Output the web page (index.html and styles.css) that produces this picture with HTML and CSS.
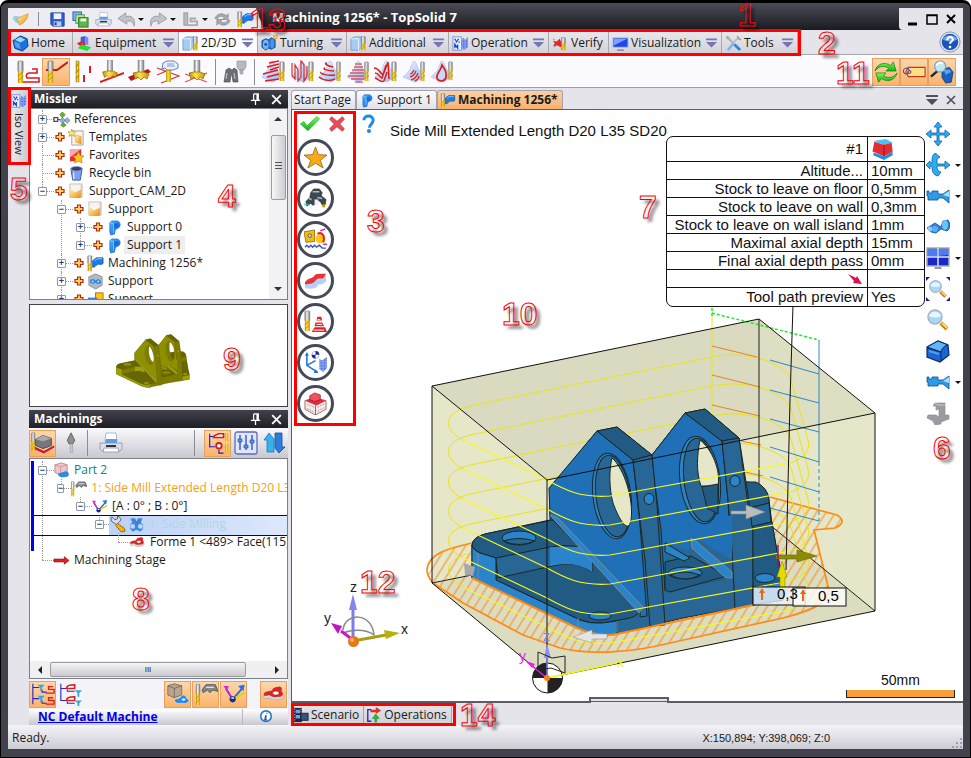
FILE: index.html
```html
<!DOCTYPE html>
<html lang="en">
<head>
<meta charset="utf-8">
<title>Machining 1256* - TopSolid 7</title>
<link rel="stylesheet" href="styles.css">
</head>
<body>
<svg class="defs" aria-hidden="true">
  <defs>
    <linearGradient id="gShank" x1="0" x2="1" y1="0" y2="0"><stop offset="0" stop-color="#777"/><stop offset=".4" stop-color="#f4f4f4"/><stop offset="1" stop-color="#777"/></linearGradient>
    <linearGradient id="gGold" x1="0" x2="1" y1="0" y2="0"><stop offset="0" stop-color="#b88c00"/><stop offset=".4" stop-color="#ffe04a"/><stop offset="1" stop-color="#c99b00"/></linearGradient>
    <linearGradient id="gBlue" x1="0" x2="1" y1="0" y2="1"><stop offset="0" stop-color="#48b8ff"/><stop offset="1" stop-color="#0a5fe0"/></linearGradient>
    <linearGradient id="gOrange" x1="0" x2="1" y1="0" y2="1"><stop offset="0" stop-color="#fff6c0"/><stop offset="1" stop-color="#ee8a00"/></linearGradient>
    <linearGradient id="gGreen" x1="0" x2="0" y1="0" y2="1"><stop offset="0" stop-color="#7dfa5c"/><stop offset="1" stop-color="#12b012"/></linearGradient>
    <linearGradient id="gCone" x1="0" x2="1" y1="0" y2="1"><stop offset="0" stop-color="#f4f9ff"/><stop offset="1" stop-color="#8fb4f4"/></linearGradient>
    <pattern id="hatch" width="8" height="8" patternUnits="userSpaceOnUse" patternTransform="rotate(32)"><path d="M4 0V8" stroke="#f28c1e" stroke-width="1"/></pattern>
    <pattern id="dots" width="3" height="3" patternUnits="userSpaceOnUse"><rect width="3" height="3" fill="#7f9cf0"/><rect width="1" height="1" fill="#1d3ccc"/></pattern>
  </defs>

  <symbol id="mill" viewBox="0 0 8 24" preserveAspectRatio="none"><rect x="1" y="1" width="6" height="11" rx="1" fill="url(#gShank)" stroke="#777" stroke-width=".6"/><rect x="1" y="11" width="6" height="12" fill="url(#gGold)"/><path d="M1 16l6-4M1 21l6-5" stroke="#a07800" stroke-width=".7"/></symbol>
  <symbol id="plus" viewBox="0 0 12 12"><path d="M4.500 2h3v2.500h2.500v3h-2.500v2.500h-3v-2.500h-2.500v-3h2.500z" fill="#ffd060" stroke="#b02a10" stroke-width="1.200"/></symbol>

  <symbol id="i-logo" viewBox="0 0 18 18"><path d="M1 6c4-2 8 0 10 2L7 13C3 13 1 9 1 6z" fill="#8ed2f6"/><path d="M5 8L17 3c0 5-4 10-9 12z" fill="url(#gOrange)" stroke="#d68a10" stroke-width=".6"/></symbol>
  <symbol id="i-save" viewBox="0 0 18 18"><path d="M2 2h14v14H4l-2-2z" fill="#2f62d2" stroke="#1c3f9a"/><rect x="5" y="2.500" width="8" height="6" fill="#eef4ff"/><rect x="5" y="11" width="8" height="5" fill="#b9cdf4"/><rect x="6" y="12" width="2" height="3" fill="#1c3f9a"/></symbol>
  <symbol id="i-saveall" viewBox="0 0 18 18"><rect x="1" y="1" width="9" height="9" fill="#7fb2ef" stroke="#2f62b2"/><rect x="4" y="4" width="9" height="9" fill="#bde4a0" stroke="#4a9a3a"/><rect x="7" y="7" width="10" height="10" fill="#5cb84a" stroke="#2c7c26"/><rect x="9" y="8" width="6" height="3" fill="#fff"/></symbol>
  <symbol id="i-print" viewBox="0 0 24 24"><path d="M7 2h10l1 8H6z" fill="#fff" stroke="#9ab" stroke-width=".8"/><path d="M7 8h11v4H6z" fill="#5b9de8"/><path d="M1 12h22v6l-2 2H3l-2-2z" fill="#d9dfec" stroke="#8893a8" stroke-width=".8"/><path d="M5 17h14l1 4H4z" fill="#fff" stroke="#8893a8" stroke-width=".8"/><rect x="7" y="14" width="10" height="2" fill="#334"/></symbol>
  <symbol id="i-undo" viewBox="0 0 18 18"><path d="M0 8l8-6 .5 4C14 4 19 8 17 16c-1-5-4-6-8-5l.5 3z" fill="#c0c3c8" stroke="#9a9ea4"/></symbol>
  <symbol id="i-redo" viewBox="0 0 18 18"><path d="M18 8l-8-6-.5 4C4 4-1 8 1 16c1-5 4-6 8-5l-.5 3z" fill="#c0c3c8" stroke="#9a9ea4"/></symbol>
  <symbol id="i-greypath" viewBox="0 0 18 18"><rect x="2" y="2" width="4" height="13" fill="#bbb" stroke="#999"/><path d="M5 15h11v-4H9v-3h6" fill="none" stroke="#aaa" stroke-width="2"/></symbol>
  <symbol id="i-sync" viewBox="0 0 18 18"><path d="M1 8c2-6 9-6 12-3l2-2v6H9l2-2C8 5 5 5 4 8z" fill="#a8acb0" stroke="#74787c" stroke-width=".6"/><path d="M17 10c-2 6-9 6-12 3l-2 2V9h6l-2 2c3 2 6 2 7-1z" fill="#a8acb0" stroke="#74787c" stroke-width=".6"/></symbol>
  <symbol id="i-machdoc" viewBox="0 0 18 18"><use href="#mill" x="0" y="0" width="6" height="18"/><path d="M6 6l4-3h7v6c-2 2-4 0-6 1s-2 3-5 3z" fill="#1c7ce8" stroke="#0c4fae" stroke-width=".8"/><path d="M8 6l3-2h5" stroke="#8fd4ff" fill="none"/></symbol>

  <symbol id="i-home" viewBox="0 0 18 18"><path d="M9 1l7 3 1 8-6 5-8-3-2-8z" fill="#1a72da" stroke="#0b3c8c"/><path d="M3 5l6-3 5 3-5 3z" fill="#9ad8ff"/><path d="M2 7l6 2 1 6-5-2z" fill="#4aa4f0"/></symbol>
  <symbol id="i-equip" viewBox="0 0 18 18"><path d="M5 2l5-1v8l-5 1z" fill="#3f5ee0"/><path d="M1 9l5-3 5 4-5 3z" fill="#e02a3a"/><path d="M6 10l10 3-4 4-10-3z" fill="#22e03a"/><path d="M10 1l3 2v8l-3-2z" fill="#8e7cf0"/></symbol>
  <symbol id="i-2d" viewBox="0 0 18 18"><path d="M1 4l4-2h7v11l-3 3H1z" fill="#a8cdf4" stroke="#5c94d4" stroke-width=".8"/><path d="M1 4h8v12" fill="none" stroke="#e8f4ff"/><use href="#mill" x="11" y="1" width="6" height="16"/></symbol>
  <symbol id="i-turn" viewBox="0 0 18 18"><path d="M1 6l4-2 3 1 3-2 4 2v8l-4 2-3-1-3 2-4-3z" fill="#2a72d4" stroke="#0b3c8c" stroke-width=".8"/><ellipse cx="5" cy="10" rx="3" ry="5" fill="#73b6f4"/><circle cx="5" cy="10" r="1.500" fill="#1c4ca8"/><ellipse cx="12" cy="9" rx="2" ry="5" fill="#4c94e4"/><rect x="13" y="0" width="4" height="4" fill="#ffd24a" stroke="#d49400" stroke-width=".6"/></symbol>
  <symbol id="i-oper" viewBox="0 0 18 18"><rect x="1" y="2" width="9" height="14" fill="#e8f0ff" stroke="#5a7fd0" stroke-width=".8"/><path d="M3 4l1 2M7 4L4 8M7 8l1-1M3 14v-4l3 4v-4" stroke="#1438c8" stroke-width="1.300" fill="none"/><path d="M10 6l2-3 2 2 3-3v11l-4 3-3-2z" fill="url(#dots)"/></symbol>
  <symbol id="i-verify" viewBox="0 0 18 18"><path d="M1 6l4 1 3-3 2 4 3 1-4 4-3-2-5 1 2-3z" fill="#e02828"/><path d="M1 4l2 1M2 13l3-2" stroke="#999"/><use href="#mill" x="9" y="2" width="6" height="15"/></symbol>
  <symbol id="i-screen" viewBox="0 0 18 18"><rect x="1" y="3" width="16" height="10" fill="#1e46e8" stroke="#b8c4e8"/><path d="M2 4h14L2 11z" fill="#7fa2ff"/><path d="M6 15h6l1 2H5z" fill="#8893a8"/></symbol>
  <symbol id="i-tools" viewBox="0 0 18 18"><path d="M2 2l13 13" stroke="#a4b0bc" stroke-width="2"/><path d="M15 2L7 10" stroke="#b8c0c8" stroke-width="2"/><path d="M9 9l-6 7" stroke="#7cb4e8" stroke-width="2.600"/><path d="M10 10l6 6" stroke="#2f86e0" stroke-width="3"/><path d="M1 1l4 1-3 3z" fill="#9aa"/><path d="M13 1l1 3 3 1" stroke="#99a" fill="none" stroke-width="1.500"/></symbol>
  <symbol id="i-help" viewBox="0 0 24 24"><circle cx="12" cy="12" r="11" fill="#dfe6f2" stroke="#7f92b8"/><circle cx="12" cy="12" r="9" fill="#1b55b8"/><path d="M4 9c3-6 13-6 16 0-4 3-12 3-16 0z" fill="#6fa5ec"/><path d="M9 10c0-5 7-4 6 0-1 2-3 2-3 4" fill="none" stroke="#fff" stroke-width="2.200"/><circle cx="12" cy="17.500" r="1.500" fill="#fff"/></symbol>

  <symbol id="t1" viewBox="0 0 24 24"><use href="#mill" x="1" y="0" width="7" height="24"/><path d="M7 22h16v-4H11q-2-4 2-5h8V9h-5" fill="none" stroke="#dc1c1c" stroke-width="1.600"/></symbol>
  <symbol id="t2" viewBox="0 0 24 24"><path d="M2 10h11L24 2" fill="none" stroke="#d01414" stroke-width="2"/><use href="#mill" x="3" y="0" width="7" height="24"/></symbol>
  <symbol id="t3" viewBox="0 0 24 24"><rect x="4" y="1" width="3" height="21" fill="url(#gGold)" stroke="#a07800" stroke-width=".5"/><path d="M4 7l3-4M4 13l3-4M4 19l3-4" stroke="#a07800"/><path d="M18 6v7M12 15v7" stroke="#e01c1c" stroke-width="2"/></symbol>
  <symbol id="cutter" viewBox="0 0 24 24"><rect x="9" y="0" width="6" height="13" fill="url(#gShank)" stroke="#888" stroke-width=".5"/><path d="M4 13l5-1h6l5 2-2 5-3-2-3 3-3-3-3 2z" fill="url(#gGold)" stroke="#8a6400" stroke-width=".7"/></symbol>
  <symbol id="t4" viewBox="0 0 24 24"><path d="M0 22L24 13" stroke="#e01c1c" stroke-width="2"/><use href="#cutter" width="22" height="22" x="-1" y="0"/></symbol>
  <symbol id="t5" viewBox="0 0 24 24"><path d="M0 17l20-8 3 3-20 9z" fill="#b81818"/><use href="#cutter" width="24" height="24" x="1" y="0"/></symbol>
  <symbol id="t6" viewBox="0 0 24 24"><path d="M1 8l22 8-18 7M1 15l14-6" fill="none" stroke="#e03030" stroke-width="1.200"/><rect x="10" y="9" width="5" height="13" fill="url(#gGold)"/><path d="M7 3l4-2h7l4 3v4l-5 2h-6L9 8l-3 1z" fill="#eef2ff" stroke="#4b6fc4" stroke-width=".9"/><path d="M11 4h7M11 6h8" stroke="#4b6fc4" stroke-width=".7"/></symbol>
  <symbol id="t7" viewBox="0 0 24 24"><path d="M1 14l22 8M1 22l22-9" stroke="#e05050" stroke-width="1.200"/><use href="#cutter" width="24" height="24" x="1" y="0"/></symbol>
  <symbol id="t8" viewBox="0 0 24 24"><path d="M3 10l3-2 3 2 2-2 3 2 1 12h-5l-1-7H8l-1 7H1z" fill="#6c7074" stroke="#444" stroke-width=".6"/><path d="M4 13l-1 6M11 13l1 6" stroke="#c8ccd0"/><path d="M14 1h9v6l-2 3h-5l-2-3zM17 10h3v4h-3z" fill="#b6babe" stroke="#8c9094" stroke-width=".6"/></symbol>
  <symbol id="cone" viewBox="0 0 24 24"><path d="M12 1c2 0 3 5 5 9l6 6-10 6-12-5 6-6c2-3 3-10 5-10z" fill="url(#gCone)" stroke="#9ab4e8" stroke-width=".5"/></symbol>
  <symbol id="u1" viewBox="0 0 24 24"><use href="#cone" width="24" height="24" x="-2"/><path d="M7 3l10-2M5 7l12-3M8 10l9-3M1 14l15-4M5 17l12-3M3 21l14-2" stroke="#e01c1c" stroke-width="1.400" fill="none"/><use href="#mill" x="17" y="1" width="6" height="21"/></symbol>
  <symbol id="u2" viewBox="0 0 24 24"><use href="#cone" width="24" height="24"/><path d="M2 3v12l3 4V5l3 5v11l3-4V1l3 4v16l3-5V6" stroke="#e02828" stroke-width="1.200" fill="none"/><use href="#mill" x="18" y="1" width="6" height="21"/></symbol>
  <symbol id="u3" viewBox="0 0 24 24"><use href="#cone" width="24" height="24"/><path d="M9 3c-4 0 0 3 6 4M7 8c-4 1 4 3 9 3M3 12c-2 2 8 4 14 3M1 17c4 4 12 4 16 2" stroke="#e01c1c" stroke-width="1.400" fill="none"/><use href="#mill" x="18" y="1" width="5" height="21"/></symbol>
  <symbol id="u4" viewBox="0 0 24 24"><use href="#cone" width="24" height="24"/><path d="M9 4h7M8 7h9M6 10h12M4 13h14M2 16h16M5 19h13M9 22h8" stroke="#e01c1c" stroke-width="1.200"/><use href="#mill" x="18" y="1" width="5" height="21"/></symbol>
  <symbol id="u5" viewBox="0 0 24 24"><use href="#cone" width="24" height="24"/><path d="M0 8c5 0 5 4 9 7L14 2l1 17M1 13c4 0 4 4 7 5l4-13M1 18c3 1 6 5 9 3l3-9" stroke="#e01c1c" stroke-width="1.500" fill="none"/><use href="#mill" x="17" y="1" width="6" height="21"/></symbol>
  <symbol id="u6" viewBox="0 0 24 24"><use href="#cone" width="24" height="24"/><path d="M8 17c3-1 5-3 6-6M9 20c4-1 6-4 7-7M13 21c2-1 4-3 4-5M8 14c2 0 3-2 4-4" stroke="#e01c1c" stroke-width="1.200" fill="none"/><use href="#mill" x="18" y="1" width="5" height="21"/></symbol>
  <symbol id="u7" viewBox="0 0 24 24"><use href="#cone" width="24" height="24"/><path d="M12 5c3 4 5 8 4 12-1 5-8 5-9 1-1-5 4-7 5-13z" stroke="#e01c1c" stroke-width="1.700" fill="#c9d8f8"/><use href="#mill" x="18" y="1" width="5" height="20"/></symbol>
  <symbol id="i-refresh" viewBox="0 0 26 26"><path d="M1 12C3 3 13 2 18 6l3-4 3 10H13l3-3C11 6 6 6 1 12z" fill="url(#gGreen)" stroke="#0a7a0a" stroke-width=".7"/><path d="M25 14c-2 9-12 10-17 6l-3 4-3-10h11l-3 3c5 3 10 3 15-3z" fill="url(#gGreen)" stroke="#0a7a0a" stroke-width=".7"/></symbol>
  <symbol id="i-tag" viewBox="0 0 26 26"><path d="M7 8h18v10H7l-3-5z" fill="#ffdf86" stroke="#c03820" stroke-width="1.200"/><circle cx="8" cy="13" r="1.700" fill="#fff" stroke="#7a2010"/><path d="M8 13c-6 6-9-3-4-4 4-1 5 3 2 6" fill="none" stroke="#4a4aa8" stroke-width="1.100"/></symbol>
  <symbol id="i-lensblue" viewBox="0 0 26 26"><path d="M13 10l8-2 4 5-2 11-6 1-4-6z" fill="#1c5fc0" stroke="#0b3676" stroke-width=".8"/><path d="M15 11l6-1 2 3-6 3z" fill="#5aa4ee"/><path d="M8 12l-7 6" stroke="#223" stroke-width="2.500"/><circle cx="11" cy="7" r="6" fill="#bfe8f4" stroke="#8fa4b8" stroke-width="1.500"/><path d="M7 6c1-3 5-4 7-2" stroke="#fff" stroke-width="2" fill="none"/></symbol>

  <symbol id="i-ref" viewBox="0 0 18 18"><path d="M1 9h7M10 5v9" stroke="#446"/><rect x="1" y="7" width="4" height="4" fill="#fff" stroke="#446" stroke-width="1.300"/><path d="M7 4l3-3 3 3-3 3zM8 15l3-3 3 3-3 2z" fill="#68b428" stroke="#3c7c10" stroke-width=".6"/><path d="M7 10l3-3 3 3-3 3zM12 10l3-3 3 3-3 3z" fill="#9ab2dc" stroke="#4c649c" stroke-width=".6"/></symbol>
  <symbol id="i-folder" viewBox="0 0 18 18"><path d="M2 1h13v14H2z" fill="#f6f4f0" stroke="#b8b0a8" stroke-width=".8"/><path d="M2 5l5 5 7-3v8l-2 1H2z" fill="url(#gOrange)"/><path d="M14 2v13" stroke="#c8c0b8"/></symbol>
  <symbol id="i-template" viewBox="0 0 18 18"><path d="M4 2h12v15H4z" fill="#f8f4ec" stroke="#a8a098"/><path d="M8 6l6 2v8l-6-2z" fill="url(#gOrange)" stroke="#d89858" stroke-width=".5"/><path d="M4 0l1 3 3 0-2 2 1 3-3-2-3 2 1-3-2-2h3z" fill="#fff2a0" stroke="#d49400" stroke-width=".8"/></symbol>
  <symbol id="i-fav" viewBox="0 0 18 18"><path d="M2 2h12v13H2z" fill="#e82c3c"/><path d="M2 2h12L2 11z" fill="#f9a8ac"/><path d="M11 5l2 4 4 .5-3 3 1 4.500-4-2-4 2 1-4.500-3-3 4-.5z" fill="#ffc41c" stroke="#c87c00" stroke-width=".7"/></symbol>
  <symbol id="i-bin" viewBox="0 0 18 18"><path d="M3 4h12l-2 12H5z" fill="#7f9ff0" stroke="#3c58a8"/><ellipse cx="9" cy="4" rx="6" ry="2.500" fill="#34406c" stroke="#8ea4dc"/><path d="M6 8v7" stroke="#dbe6ff" stroke-width="1.500"/></symbol>
  <symbol id="i-part" viewBox="0 0 18 18"><path d="M4 4l2-2h6c4 1 4 7 0 8l-2 1-1 5-4 1-1-3z" fill="url(#gBlue)" stroke="#0c58b8" stroke-width=".6"/><path d="M8 5l5-1v4l-4 2z" fill="#1468e8"/><path d="M4 4l4 1v10" stroke="#9adcff" fill="none" stroke-width=".7"/></symbol>
  <symbol id="i-asm" viewBox="0 0 18 18"><path d="M9 1l7 3v9l-7 4-7-4V4z" fill="#b4b8c0" stroke="#8c94a4"/><path d="M3 9c1-4 5-3 6-1 3-3 6-1 6 2-3 3-5 1-6 0-2 2-5 2-6-1z" fill="#2a8ae8"/><circle cx="6" cy="9" r="1" fill="#cfe6ff"/><circle cx="12" cy="9" r="1" fill="#cfe6ff"/></symbol>
  <symbol id="i-support2" viewBox="0 0 18 18"><rect x="9" y="2" width="8" height="7" fill="#ffc41c" stroke="#a87800"/><path d="M1 7h10v6H1z" fill="#3c7cd8"/></symbol>

  <symbol id="i-stock" viewBox="0 0 26 26"><path d="M5 9l8-4 9 3v8l-9 3-8-3z" fill="#74787c" stroke="#44484c"/><path d="M5 9l8-4 9 3-9 3z" fill="#a8acb0"/><path d="M3 16l11 5 11-6 1 3-12 7-11-5z" fill="#d42020" stroke="#fff" stroke-width=".6"/><use href="#mill" x="0" y="1" width="5" height="22"/></symbol>
  <symbol id="i-holder" viewBox="0 0 18 26"><path d="M9 2l4 8-2 4H7L5 10z" fill="#8c9094" stroke="#5c6064"/><rect x="8" y="14" width="3" height="9" fill="#c4c8cc" stroke="#8c9094" stroke-width=".5"/></symbol>
  <symbol id="i-optree" viewBox="0 0 26 26"><path d="M4 3v15M4 6h6M4 17h6M14 20v4h5" stroke="#1c1cd0" stroke-width="1.200" fill="none"/><path d="M8 7c0-3 4-3 6-4h5v4z" fill="#fff" stroke="#d81c1c" stroke-width="1.700"/><circle cx="14" cy="16" r="3" fill="#fff" stroke="#d81c1c" stroke-width="2"/><rect x="21" y="2" width="3" height="9" fill="url(#gGold)"/><rect x="21" y="14" width="3" height="10" fill="url(#gGold)"/></symbol>
  <symbol id="i-sliders" viewBox="0 0 24 24"><rect x="1" y="1" width="22" height="22" rx="2" fill="#dde6fa" stroke="#5c6cb8" stroke-width="1.300"/><path d="M6 4v15M12 4v15M18 4v15" stroke="#24409c" stroke-width="1.200"/><path d="M4 8h4v3H4zM10 14h4v3h-4zM16 9h4v3h-4z" fill="#4c9cec" stroke="#24409c" stroke-width=".6"/></symbol>
  <symbol id="i-updown" viewBox="0 0 24 24"><path d="M7 2l5 6v13H5V9H2z" fill="#38b0f0" stroke="#1a78c8" stroke-width=".8"/><path d="M17 22l-4-5V2h7v14h3z" fill="#2c7cdc" stroke="#124c9c" stroke-width=".8"/></symbol>
  <symbol id="i-pinkpart" viewBox="0 0 18 18"><path d="M2 3l7-2 6 2v8l-7 3-6-3z" fill="#f0c4c8" stroke="#a87c80" stroke-width=".8"/><path d="M2 3l6 2 7-2M8 5v9" stroke="#c09094" fill="none" stroke-width=".8"/><path d="M5 13c3-3 5-1 7-3 4-1 6 3 4 5-4 1-8 3-11-2z" fill="#2a8ae8"/></symbol>
  <symbol id="i-sidemill" viewBox="0 0 18 18"><path d="M6 6l3-4h7l2 5-4-1-2 2-2-2-3 2z" fill="#84888c" stroke="#44484c" stroke-width=".6"/><path d="M9 4h6" stroke="#ddd"/><use href="#mill" x="1" y="1" width="4" height="17"/></symbol>
  <symbol id="i-axis" viewBox="0 0 18 18"><path d="M8 13L3 5M8 13l7-8" stroke="#3c64d0" stroke-width="1.500"/><path d="M8 13L3 5" stroke="#c82cd8" stroke-width="1.300"/><path d="M1 3h4l-1 4z" fill="#d02cd0"/><path d="M8 13l9-5" stroke="#e0d400" stroke-width="1.500"/><path d="M17 2l-5 1 4 4z" fill="#2474e8"/><circle cx="8" cy="13" r="2.300" fill="#1c2c80"/><path d="M7 12h2" stroke="#fff"/></symbol>
  <symbol id="i-wrench" viewBox="0 0 18 18"><path d="M2 1l3 3 3-1V0c5 2 3 6 2 6l-3 3-5-3-1-3z" fill="#d8dce4" stroke="#445" stroke-width=".8"/><path d="M8 8l7 5 1 3-4 1-6-7z" fill="#ffb400" stroke="#885400" stroke-width=".9"/></symbol>
  <symbol id="i-milling" viewBox="0 0 18 18"><path d="M2 2h6l1 3 1-3h6l-2 5 2 2v5l-3 3-4-2-4 2-3-3V9l2-2z" fill="#3c84e0" stroke="#b8d4f8"/><circle cx="5" cy="11" r="2.500" fill="#bcd8fa"/><circle cx="13" cy="11" r="2.500" fill="#bcd8fa"/></symbol>
  <symbol id="i-forme" viewBox="0 0 26 18"><path d="M2 11c2-4 6-2 9-4 1-5 6-4 8-5 4 1 2 4 2 6 5 3 1 8-4 7-4 1-7 0-9-2-3 1-7 2-6-2z" fill="#d6d8dc" stroke="#999" stroke-width=".5"/><path d="M2 9c2-4 6-2 9-4 1-4 6-3 8-4 4 1 2 4 2 5 4 3 0 7-4 6-4 1-7 0-9-2-3 1-7 2-6-1z" fill="#dc2424"/><ellipse cx="15" cy="8" rx="3.500" ry="2.200" fill="#fff" stroke="#911" stroke-width=".6"/></symbol>
  <symbol id="i-redarrow" viewBox="0 0 18 18"><path d="M1 7.500h11V5l5 4-5 4v-2.500H1z" fill="#e02424" stroke="#8c0c0c" stroke-width=".7"/></symbol>
  <symbol id="i-tree1" viewBox="0 0 26 26"><path d="M2 2v22M2 6h7M2 18h7M12 8v3h5M12 20v3h5" stroke="#2424d0" stroke-width="1.200" fill="none"/><path d="M7 3h8l-3 3v4h-2V6zM7 15h8l-3 3v4h-2v-4z" fill="#38a8d8"/><path d="M24 5h-5v3h6v4h-9M24 17h-5v3h6v4h-9" stroke="#d82020" stroke-width="1.500" fill="none"/></symbol>
  <symbol id="i-tree2" viewBox="0 0 26 26"><path d="M2 2v18h6M2 7h6M9 8v2h8M9 21v2h8" stroke="#2424d0" stroke-width="1.200" fill="none"/><path d="M8 7c0-4 5-4 9-4v4zM8 20c0-4 5-4 9-4v4z" fill="#fff" stroke="#d82020" stroke-width="1.700"/><path d="M17 9h8l-3 3v4h-2v-4zM17 20h8l-3 3v3h-2v-3z" fill="#38a8d8"/></symbol>
  <symbol id="i-boxshape" viewBox="0 0 26 26"><path d="M2 4l7-2 8 2v10l-8 3-7-3z" fill="#b8a490" stroke="#6c5c4c" stroke-width=".8"/><path d="M2 4l7 3 8-3M9 7v10" stroke="#6c5c4c" fill="none" stroke-width=".8"/><path d="M9 20c2-3 5-1 7-4 1-3 6-2 6 1l3 3c-1 3-4 4-8 3-4 1-7 0-8-3z" fill="#2a8ae8" stroke="#fff" stroke-width=".5"/><ellipse cx="19" cy="19" rx="2" ry="1.200" fill="#fff"/></symbol>
  <symbol id="i-info" viewBox="0 0 16 16"><circle cx="8" cy="7" r="6" fill="#fff" stroke="#2c74c8" stroke-width="1.800"/><path d="M8 6l-1 5h2M9 3v1" stroke="#1c5cc0" stroke-width="2" fill="none"/></symbol>

  <symbol id="i-check" viewBox="0 0 24 24"><path d="M1 12l4-3 4 5L21 3l3 3L10 20z" fill="url(#gGreen)" stroke="#20a820" stroke-width=".8"/></symbol>
  <symbol id="i-cancel" viewBox="0 0 24 24"><path d="M4 1l8 7 8-7 3 4-7 7 7 7-3 4-8-7-8 7-3-4 7-7-7-7z" fill="#ec4c54" stroke="#a8242c"/></symbol>
  <symbol id="i-ask" viewBox="0 0 14 20"><path d="M2 6C2 0 12 0 12 6c0 4-4 4-4 8" fill="none" stroke="#168cf0" stroke-width="3.200"/><circle cx="7.500" cy="17.500" r="2.200" fill="#168cf0"/></symbol>
  <symbol id="p1" viewBox="0 0 24 24"><path d="M12 1l3 8 9 .5-7 5.500 3 8-8-5-8 5 3-8-7-5.500L9 9z" fill="#fba81a" stroke="#8c6410" stroke-width=".8"/></symbol>
  <symbol id="p2" viewBox="0 0 24 24"><path d="M7 6l3-4h6l3 4-1 3 5 4-1 6h-3l-2-4-3-1-2 4-3 1-2-2-4 3-1-5 4-4z" fill="#3c4850" stroke="#1c2428" stroke-width=".6"/><path d="M9 5h7M5 12l3 1M14 11l5 1" stroke="#a4c0c4" stroke-width="1.500"/><path d="M11 13h4v6h-4z" fill="#eef"/><path d="M0 18h5" stroke="#20d4b0"/><path d="M19 18h3v3h-3z" fill="#d49400"/></symbol>
  <symbol id="p3" viewBox="0 0 24 24"><path d="M0 4l11-2v12l-9 1z" fill="#f0bc10" stroke="#8c6400" stroke-width=".8"/><circle cx="6" cy="8" r="1.800" fill="#ddd" stroke="#555"/><circle cx="17" cy="11" r="5" fill="#ffc41c"/><path d="M14 6c6-3 8 4 6 9" stroke="#e02020" stroke-width="2" fill="none"/><path d="M17 3l5-2M20 17l4 0" stroke="#c02cd0" stroke-width="1.500"/><path d="M1 20l2-2 2 2 2-2 2 2 2-2 2 2 3-2 3 3 4 0" stroke="#3c50d8" stroke-width="1.500" fill="none"/></symbol>
  <symbol id="p4" viewBox="0 0 24 24"><path d="M1 13h8c3-1 3-6 6-6h8v6l-4 3h-4c-2 5-6 5-14 4z" fill="#b4d0f8"/><path d="M1 14C4 9 8 10 10 8 12 5 13 5 23 5l-3 5h-5c-4 1-2 6-14 6z" fill="#e83434"/></symbol>
  <symbol id="p5" viewBox="0 0 24 24"><use href="#mill" x="0" y="0" width="7" height="23"/><path d="M8 23l3-5h11l2 5zM11 17l1-4h7l2 4zM13 11l1-4h4l1 4z" fill="#e02424"/><path d="M10 21h11M13 15h6M14 10h3" stroke="#fff" stroke-width="1"/></symbol>
  <symbol id="p6" viewBox="0 0 24 24"><path d="M3 4v11l11 7M3 15l9-5" stroke="#1c74e0" stroke-width="1.600" fill="none"/><path d="M1 5l2-4 2 4zM12 19l3 4-5 0z" fill="#1c74e0"/><circle cx="12" cy="4" r="3.800" fill="#fff" stroke="#88a" stroke-width=".6"/><path d="M12 4V0a4 4 0 0 1 4 4zM12 4v4a4 4 0 0 1-4-4z" fill="#1c2c90"/><path d="M16 8l3 2 2-2 3-2v12l-4 4-4-3z" fill="url(#dots)"/></symbol>
  <symbol id="p7" viewBox="0 0 24 24"><path d="M1 9l10-3 12 3v9l-11 6L1 18z" fill="#eee" stroke="#944" stroke-width=".8"/><path d="M1 9l10-3 12 3-10 5z" fill="#e02c3c"/><path d="M6 4l5-3 6 2v5l-6 2-5-2z" fill="#f05060" stroke="#8c1018" stroke-width=".7"/><path d="M12 14v10" stroke="#c44c54"/><path d="M3 13l8 3M3 17l8 4M14 16l8-4M14 20l8-4" stroke="#d88c90" stroke-dasharray="2 1"/></symbol>

  <symbol id="v1" viewBox="0 0 24 24"><path d="M12 0l4 5h-3v6h6V8l5 4-5 4v-3h-6v6h3l-4 5-4-5h3v-6H5v3l-5-4 5-4v3h6V5H8z" fill="#2cb0ec" stroke="#0c5cac" stroke-width=".8"/></symbol>
  <symbol id="v2" viewBox="0 0 24 24"><path d="M10 1l4 3-3 2v5h8V8l5 4-5 4v-3h-8c0 4 1 5 4 6l-3 4c-5-1-6-5-6-10H4v3l-4-4 4-4v2h2c0-5 0-9 4-10z" fill="#2cb0ec" stroke="#0c5cac" stroke-width=".8"/></symbol>
  <symbol id="v3" viewBox="0 0 24 24"><path d="M1 7h2v2h3V7h6v3h5l6-4v13l-6-5h-5v2H2v-4H1z" fill="#2c9ce4" stroke="#0c4c9c" stroke-width=".8"/><path d="M17 11l6-4v6z" fill="#a4e0ff"/></symbol>
  <symbol id="v4" viewBox="0 0 24 24"><path d="M1 13l8-5 6 4 2-6 5-1 2 4-1 5-2 2-6-2-5 4-5-1z" fill="#2c84dc" stroke="#0c4c9c" stroke-width=".8"/><circle cx="4" cy="14" r="2.500" fill="#8cc8f8"/><circle cx="9" cy="14" r="3" fill="#5cacf0"/><ellipse cx="19" cy="10" rx="3" ry="5" fill="#6cc4f8"/></symbol>
  <symbol id="v5" viewBox="0 0 24 24"><rect x="1" y="2" width="22" height="18" fill="#1828c8" stroke="#a8acb4" stroke-width="1.500"/><path d="M2 3h9v7l-9 1zM13 3h9v6l-9 1z" fill="#4c7cf4"/><path d="M12 2v18M1 11h22" stroke="#dce4ff" stroke-width="1.500"/><path d="M9 21h6l1 2H8z" fill="#9a9ea4"/></symbol>
  <symbol id="lens" viewBox="0 0 24 24"><path d="M15 15l6 6" stroke="#c87c10" stroke-width="4"/><path d="M16 15l5 5" stroke="#ffd870" stroke-width="2"/><circle cx="9" cy="9" r="7" fill="#a8d8f8" stroke="#a8b4c8" stroke-width="1.500"/><path d="M3 8c1-5 10-6 12 0-4 2-8 2-12 0z" fill="#e4f6ff"/></symbol>
  <symbol id="v6" viewBox="0 0 24 24"><use href="#lens" x="2" y="2" width="20" height="20"/><path d="M0 0h4L0 4zM24 0h-4l4 4zM0 24v-4l4 4zM24 24v-4l-4 4z" fill="#1420a0"/></symbol>
  <symbol id="v8" viewBox="0 0 24 24"><path d="M1 8l11-6 10 4 1 10-9 7L1 18z" fill="#1c64d0" stroke="#0a2c70" stroke-width="1.200"/><path d="M1 8l11-6 10 4c-4 1-6 3-7 7z" fill="#64b4f8" stroke="#0a2c70"/><path d="M1 9l14 4v9" stroke="#0a2c70" fill="none"/><path d="M3 12l10 3" stroke="#4ca0f0" stroke-width="2"/></symbol>
  <symbol id="v9" viewBox="0 0 24 24"><path d="M9 2h10v12h4v4l-8 3v2l-6 1-2-4-6-3 1-3h8l3 2V8l-3 1V5H7z" fill="#9a9ca0" stroke="#84868a" stroke-width=".6"/><path d="M9 2l3 2h7" stroke="#c4c6ca" fill="none"/></symbol>
  <symbol id="i-cube" viewBox="0 0 24 24"><path d="M2 15l11 4 9-5v4l-9 5-11-5z" fill="#1c90e8"/><path d="M2 3l13-2 7 4-9 2z" fill="#48c0f8"/><path d="M3 4l10 3 8-2 1 9-9 5-12-5z" fill="#e42c34"/><path d="M13 7v12" stroke="#981018"/></symbol>
  <symbol id="i-film" viewBox="0 0 18 18"><rect x="1" y="1" width="9" height="16" fill="#223"/><path d="M3 3h5v4H3zM3 9h5v4H3z" fill="#64a4ec"/><rect x="9" y="7" width="8" height="8" fill="#38507c" stroke="#223"/><path d="M2 2v15M9 2v4" stroke="#fff" stroke-dasharray="1 2"/></symbol>
  <symbol id="i-ops" viewBox="0 0 18 18"><path d="M6 3H2v13h4" stroke="#2424d0" stroke-width="1.500" fill="none"/><path d="M5 3h6V0l6 4-6 4V6H5z" fill="#e03020"/><path d="M10 17v-4H7l4-5 4 5h-3v4z" fill="#1cc42c" stroke="#0c7c14" stroke-width=".5"/></symbol>
  <symbol id="i-pin" viewBox="0 0 12 14"><path d="M4 1h5v7M4 1v7M1 8h10M6 8v5" stroke="#fff" stroke-width="1.300" fill="none"/><path d="M8 1v7" stroke="#fff" stroke-width="2"/></symbol>
  <symbol id="i-x" viewBox="0 0 12 12"><path d="M2 2l8 8M10 2l-8 8" stroke="currentColor" stroke-width="1.700"/></symbol>
  <symbol id="i-drop" viewBox="0 0 12 12"><path d="M0 1h12v2H0zM0 5h12l-6 6z" fill="currentColor"/></symbol>

  <symbol id="bracket" viewBox="470 405 316 234">
    <g stroke="var(--edge)" stroke-width="1" stroke-linejoin="round">
      <path fill="var(--mid)" d="M472 545Q473 537 485 534L550 520V488L597 431 617 427 652 455 685 413 705 409 739 438 746 482 756 483Q768 488 769 500L772 524 778 557 783 580V600L753 605 683 618 617 634Q600 638 577 628L472 578z"/>
      <path fill="var(--dark)" d="M472 545Q473 537 485 534L562 518 640 608Q640 617 625 619L602 623Q590 624 580 620L496 580V558L480 553Q472 549 472 545z"/>
      <path fill="var(--light)" d="M472 545Q472 549 480 553L496 558V580L580 620Q590 624 602 623L617 621V634Q600 638 577 628L472 578z"/>
      <path fill="var(--mid)" d="M496 558L550 547Q575 542 592 553V572Q578 560 552 566L498 578z"/>
      <path fill="var(--light)" d="M550 547V566Q575 560 592 572V547z" stroke="none"/>
      <path fill="var(--face)" d="M549 488L597 431 633 460 640 525 647 616 640 617Q641 610 637 606L550 517z"/>
      <path fill="var(--light)" stroke="#7c8c90" d="M550 515L558 518 643 607 639 613z"/>
      <path fill="var(--dark)" d="M597 431L617 427 652 455 633 460z"/>
      <path fill="var(--mid)" d="M633 460L652 455 657 505 665 625 650 626 645 560 640 520z"/>
      <path fill="var(--face)" d="M652 455L685 413 722 441 728 500 732 577 665 591 661 530 655 485z"/>
      <path fill="var(--dark)" d="M685 413L705 409 739 438 722 441z"/>
      <path fill="var(--mid)" d="M722 441L739 438 748 505 753 526V605L735 609 732 550 728 500z"/>
      <path fill="var(--dark)" d="M746 482H756Q768 488 769 500V503L750 508z"/>
      <path fill="var(--mid)" d="M750 508L769 503 771 522 752 527z"/>
      <path fill="var(--dark)" d="M753 526L772 522 778 557 783 580V582L753 588z"/>
      <path fill="var(--light)" d="M753 588L783 582V600L753 605z"/>
      <path fill="var(--mid)" d="M665 541V590Q667 593 672 591L728 578Q732 576 732 570V540z" stroke="none"/>
      <path fill="var(--dark)" d="M665 562L691 556 727 576 670 592Q666 591 665 588z"/>
      <path fill="var(--face)" d="M665 530L732 515V560L696 538 689 537V552L665 541z" stroke="none"/>
      <path fill="var(--light)" stroke="#7c8c90" d="M691 538L697 542 732 572V578L726 578 692 548z"/>
      <path fill="var(--light)" d="M665 543L690 558 684 561 665 552z"/>
      <g>
        <ellipse cx="612" cy="496" rx="19" ry="43" transform="rotate(-7 612 496)" fill="var(--light)"/>
        <ellipse cx="613" cy="496" rx="17" ry="41" transform="rotate(-7 613 496)" fill="var(--mid)"/>
        <path fill="var(--hole)" d="M612 458C624 468 634 500 631 520 628 536 618 517 613 503 609 488 609 470 612 458z"/>
        <ellipse cx="700" cy="480" rx="20" ry="44" transform="rotate(-7 700 480)" fill="var(--light)"/>
        <ellipse cx="701" cy="480" rx="17" ry="42" transform="rotate(-7 701 480)" fill="var(--mid)"/>
        <path fill="var(--hole)" d="M700 440C712 449 721 471 718 486L701 486C696 472 697 455 700 440z"/>
        <path fill="var(--dark)" d="M702 487L718 484V514L707 508z"/>
      </g>
      <ellipse cx="649" cy="499" rx="5" ry="5.500" fill="var(--light)"/>
      <ellipse cx="735" cy="481" rx="5" ry="5.500" fill="var(--light)"/>
      <ellipse cx="519" cy="538" rx="17" ry="7" fill="var(--light)"/>
      <path d="M503 541Q519 548 535 541Q519 536 503 541z" fill="var(--mid)"/>
      <ellipse cx="600" cy="616" rx="11" ry="4" fill="var(--light)"/>
      <ellipse cx="685" cy="573" rx="17" ry="6" fill="var(--light)"/>
      <path d="M670 575Q685 569 700 575Q685 583 670 575z" fill="var(--mid)"/>
      <ellipse cx="765" cy="578" rx="10" ry="4.500" fill="var(--light)"/>
      <path fill="none" stroke="#7c8c90" d="M478 553V579M578 628V618M617 621V632"/>
    </g>
  </symbol>
</svg>

<div class="window">
  <header class="titlebar">
    <div class="quick">
      <button aria-label="Menu"><svg><use href="#i-logo"/></svg></button><i class="bar"></i>
      <button aria-label="Save"><svg><use href="#i-save"/></svg></button>
      <button aria-label="Save all"><svg><use href="#i-saveall"/></svg></button>
      <button aria-label="Print"><svg><use href="#i-print"/></svg></button>
      <button class="more" aria-label="Undo"><svg><use href="#i-undo"/></svg></button>
      <button class="more" aria-label="Redo"><svg><use href="#i-redo"/></svg></button>
      <button class="more" aria-label="Tool path"><svg><use href="#i-greypath"/></svg></button>
      <button aria-label="Update"><svg><use href="#i-sync"/></svg></button>
      <button aria-label="Machining"><svg><use href="#i-machdoc"/></svg></button>
    </div>
    <h1>Machining 1256* - TopSolid 7</h1>
    <div class="controls">
      <button aria-label="Minimize"><svg viewBox="0 0 14 14"><path d="M2 12h9" stroke="#000" stroke-width="3"/></svg></button>
      <button aria-label="Maximize"><svg viewBox="0 0 14 14"><path d="M2 3h10v9H2zM2 3.500h10" stroke="#000" stroke-width="1.500" fill="none"/></svg></button>
      <button aria-label="Close"><svg viewBox="0 0 14 14"><path d="M3 3l8 8M11 3l-8 8" stroke="#000" stroke-width="2"/></svg></button>
    </div>
  </header>

  <div class="ribbon">
    <nav class="menu" aria-label="Main">
      <button><svg><use href="#i-home"/></svg><span>Home</span></button>
      <button><svg><use href="#i-equip"/></svg><span>Equipment</span><svg class="drop"><use href="#i-drop"/></svg></button>
      <button class="current"><svg><use href="#i-2d"/></svg><span>2D/3D</span><svg class="drop"><use href="#i-drop"/></svg></button>
      <button><svg><use href="#i-turn"/></svg><span>Turning</span><svg class="drop"><use href="#i-drop"/></svg></button>
      <button><svg><use href="#i-2d"/></svg><span>Additional</span><svg class="drop"><use href="#i-drop"/></svg></button>
      <button><svg><use href="#i-oper"/></svg><span>Operation</span><svg class="drop"><use href="#i-drop"/></svg></button>
      <button><svg><use href="#i-verify"/></svg><span>Verify</span></button>
      <button><svg><use href="#i-screen"/></svg><span>Visualization</span><svg class="drop"><use href="#i-drop"/></svg></button>
      <button><svg><use href="#i-tools"/></svg><span>Tools</span><svg class="drop"><use href="#i-drop"/></svg></button>
    </nav>
    <button class="help" aria-label="Help"><svg><use href="#i-help"/></svg></button>
  </div>

  <div class="toolbar">
    <button aria-label="Pocketing"><svg><use href="#t1"/></svg></button>
    <button class="on" aria-label="Side milling"><svg><use href="#t2"/></svg></button>
    <button aria-label="Drilling"><svg><use href="#t3"/></svg></button>
    <button aria-label="Facing"><svg><use href="#t4"/></svg></button>
    <button aria-label="Slotting"><svg><use href="#t5"/></svg></button>
    <button aria-label="Manual milling"><svg><use href="#t6"/></svg></button>
    <button aria-label="Chamfering"><svg><use href="#t7"/></svg></button>
    <i class="bar"></i>
    <button aria-label="Find tool"><svg><use href="#t8"/></svg></button>
    <i class="bar"></i>
    <button aria-label="Roughing"><svg><use href="#u1"/></svg></button>
    <button aria-label="Plunge roughing"><svg><use href="#u2"/></svg></button>
    <button aria-label="Z level"><svg><use href="#u3"/></svg></button>
    <button aria-label="Parallel planes"><svg><use href="#u4"/></svg></button>
    <button aria-label="Sweeping"><svg><use href="#u5"/></svg></button>
    <button aria-label="Rest milling"><svg><use href="#u6"/></svg></button>
    <button aria-label="Contour"><svg><use href="#u7"/></svg></button>
    <span class="spring"></span>
    <button class="on" aria-label="Refresh"><svg><use href="#i-refresh"/></svg></button>
    <button class="on" aria-label="Tags"><svg><use href="#i-tag"/></svg></button>
    <button class="on" aria-label="Inspect"><svg><use href="#i-lensblue"/></svg></button>
  </div>

  <div class="body">
    <aside class="strip"><button class="iso"><svg><use href="#i-oper"/></svg><span>Iso View</span></button></aside>

    <div class="left">
      <section class="panel missler">
        <h2>Missler <svg class="pin"><use href="#i-pin"/></svg><svg><use href="#i-x"/></svg></h2>
        <div class="list">
          <ul class="tree">
            <li><div class="row"><b>+</b><svg><use href="#i-ref"/></svg><span>References</span></div></li>
            <li><div class="row"><b>+</b><svg class="plus"><use href="#plus"/></svg><svg><use href="#i-template"/></svg><span>Templates</span></div></li>
            <li><div class="row leaf"><svg class="plus"><use href="#plus"/></svg><svg><use href="#i-fav"/></svg><span>Favorites</span></div></li>
            <li><div class="row leaf"><svg class="plus"><use href="#plus"/></svg><svg><use href="#i-bin"/></svg><span>Recycle bin</span></div></li>
            <li><div class="row"><b>−</b><svg class="plus"><use href="#plus"/></svg><svg><use href="#i-folder"/></svg><span>Support_CAM_2D</span></div>
              <ul>
                <li><div class="row"><b>−</b><svg class="plus"><use href="#plus"/></svg><svg><use href="#i-folder"/></svg><span>Support</span></div>
                  <ul>
                    <li><div class="row"><b>+</b><svg class="plus"><use href="#plus"/></svg><svg><use href="#i-part"/></svg><span>Support 0</span></div></li>
                    <li><div class="row"><b>+</b><svg class="plus"><use href="#plus"/></svg><svg><use href="#i-part"/></svg><span class="marked">Support 1</span></div></li>
                  </ul></li>
                <li><div class="row"><b>+</b><svg class="plus"><use href="#plus"/></svg><svg><use href="#i-machdoc"/></svg><span>Machining 1256*</span></div></li>
                <li><div class="row"><b>+</b><svg class="plus"><use href="#plus"/></svg><svg><use href="#i-asm"/></svg><span>Support</span></div></li>
                <li><div class="row"><b>+</b><svg class="plus"><use href="#plus"/></svg><svg><use href="#i-support2"/></svg><span>Support</span></div></li>
              </ul></li>
          </ul>
          <div class="vscroll"><i class="up"></i><i class="thumb"></i><i class="down"></i></div>
        </div>
      </section>

      <div class="preview"><svg class="olive"><use href="#bracket"/></svg></div>

      <section class="panel machinings">
        <h2>Machinings <svg class="pin"><use href="#i-pin"/></svg><svg><use href="#i-x"/></svg></h2>
        <div class="subbar">
          <button class="on" aria-label="Show stock"><svg><use href="#i-stock"/></svg></button>
          <button aria-label="Tool holder"><svg><use href="#i-holder"/></svg></button>
          <i class="bar"></i>
          <button class="printer" aria-label="Print"><svg><use href="#i-print"/></svg></button>
          <span class="spring"></span><i class="bar"></i>
          <button class="on" aria-label="Operations tree"><svg><use href="#i-optree"/></svg></button>
          <button aria-label="Settings"><svg><use href="#i-sliders"/></svg></button>
          <button aria-label="Sort"><svg><use href="#i-updown"/></svg></button>
        </div>
        <div class="list ops">
          <ul class="tree">
            <li><div class="row"><b>−</b><svg><use href="#i-pinkpart"/></svg><span class="teal">Part 2</span></div>
              <ul><li><div class="row"><b>−</b><svg><use href="#i-sidemill"/></svg><span class="amber">1: Side Mill Extended Length D20 L35 SD20</span></div>
                <ul><li><div class="row"><b>−</b><svg><use href="#i-axis"/></svg><span>[A : 0° ; B : 0°]</span></div>
                  <ul><li><div class="row picked"><b>−</b><svg><use href="#i-wrench"/></svg><svg><use href="#i-milling"/></svg><span class="pale">1: Side Milling</span></div>
                    <ul><li><div class="row leaf"><svg><use href="#i-forme"/></svg><span>Forme 1 &lt;489&gt; Face(115)</span></div></li></ul></li></ul></li></ul></li></ul></li>
            <li><div class="row leaf"><svg><use href="#i-redarrow"/></svg><span>Machining Stage</span></div></li>
          </ul>
          <div class="hscroll"><i class="prev"></i><i class="grip">III</i><i class="next"></i></div>
        </div>
        <div class="subbar filters">
          <button class="on" aria-label="Filter tree"><svg><use href="#i-tree1"/></svg></button>
          <button aria-label="Filter list"><svg><use href="#i-tree2"/></svg></button>
          <span class="spring"></span>
          <button class="on" aria-label="Parts"><svg><use href="#i-boxshape"/></svg></button>
          <button class="on" aria-label="Tools"><svg><use href="#i-sidemill"/></svg></button>
          <button class="on" aria-label="Axes"><svg><use href="#i-axis"/></svg></button>
          <button class="on apart" aria-label="Shapes"><svg><use href="#i-forme"/></svg></button>
        </div>
        <div class="machine"><a href="#">NC Default Machine</a><button aria-label="Machine information"><svg><use href="#i-info"/></svg></button></div>
      </section>
    </div>

    <main>
      <div class="tabs">
        <button>Start Page</button>
        <button><svg><use href="#i-part"/></svg>Support 1</button>
        <button class="active"><svg><use href="#i-machdoc"/></svg>Machining 1256*</button>
        <span class="spring"></span>
        <svg class="tabctl"><use href="#i-drop"/></svg><svg class="tabctl"><use href="#i-x"/></svg>
      </div>
      <div class="canvas">
        <svg class="scene" viewBox="292 110 671 590" preserveAspectRatio="xMinYMin meet" role="img" aria-label="Machined part with tool path">
          <path d="M432 386L759 319 875 413V611L547 678 432 583z" fill="#e6e6c8"/>
          <path d="M432 386L759 319 875 413 547 480z" fill="#dadac0"/>
          <path d="M759 319L875 413 759 437z" fill="#dedec2"/>
          <path d="M432 583L759 516 875 611 547 678z" fill="#dcdcc0"/>
          <path d="M427 570C428 553 450 548 472 543L770 497 837 515Q848 522 835 528L814 530 829 590C828 605 806 612 783 618L670 643C630 653 590 655 560 648L523 635 463 603 433 583Q427 576 427 570z" fill="url(#hatch)" stroke="#ff8a14" stroke-width="1.700"/>
          <g fill="none" stroke="#e8e41c" stroke-width="1">
            <path id="loopBack" d="M790 463C804 459 811 450 808 440L791 380C785 362 745 350 712 357L475 405C443 411 441 428 463 440"/>
            <use href="#loopBack" y="29"/><use href="#loopBack" y="59"/><use href="#loopBack" y="88"/><use href="#loopBack" y="118"/><use href="#loopBack" y="147"/>
            <path d="M712 316V490"/>
          </g>
          <g fill="none" stroke-width="1">
            <path d="M712 346l45 11M712 375l48 12M712 405l48 11M741 441l20 4M745 472l18 4" stroke="#e88420"/>
            <path d="M770 360l49 14M770 390l49 13M770 419l49 13M770 447l49 15M770 477l49 15M770 508l49 13M819 340V462" stroke="#2c88c4"/>
            <path d="M819 462V521" stroke="#2c88c4" stroke-dasharray="4 3"/>
            <path d="M712 313L819 340M712 308V316" stroke="#1cf01c" stroke-width="1.500" stroke-dasharray="3 2"/>
          </g>
          <path d="M759 319V516L875 611M432 583L472 575" fill="none" stroke="#222" stroke-width="1"/>
          <use class="steel" href="#bracket" x="470" y="405" width="316" height="234"/>
          <path d="M472 578L577 628Q600 638 617 634L753 605" fill="none" stroke="#ff8a14" stroke-width="2"/>
          <g fill="none" stroke="#f8f820" stroke-width="1.200">
            <path id="loopFront" d="M463 440L547 480C565 490 580 498 610 496L790 463"/>
            <use href="#loopFront" y="29"/><use href="#loopFront" y="59"/><use href="#loopFront" y="88"/><use href="#loopFront" y="118"/><use href="#loopFront" y="147"/>
          </g>
          <path d="M432 386L759 319 875 413V611L547 678 432 583V386L547 480 875 413M547 480V678" fill="none" stroke="#111" stroke-width="1"/>
          <path d="M793 305L790 400 786 570" stroke="#111" fill="none"/>
          <path d="M731 511H746V505L765 512 746 519V514H731z" fill="#bcbcbc" stroke="#888" stroke-width=".6"/>
          <path d="M607 634H592V630L573 637 592 643V639H607z" fill="#e4e4e4" stroke="#999" stroke-width=".6"/>
          <path d="M464 563l11 4-2 9-8-1z" fill="#a8a8a8"/>
          <path d="M776 555H797V550L817 556 797 562V559H776z" fill="#8c8c04" stroke="#666600" stroke-width=".6"/><path d="M778 545V568" stroke="#8c1c6c" stroke-width="1.500"/>
          <path d="M780 590V577H777L782 561 787 577H785V590z" fill="#e4dc00" stroke="#8c8c04" stroke-width=".6"/>
          <g stroke="#111"><rect x="753" y="587" width="52" height="18" fill="#eef2f6" fill-opacity=".8"/><rect x="793" y="588" width="53" height="18" fill="#fff" fill-opacity=".8"/></g>
          <path d="M761 600v-7h-2l3-5 3 5h-2v7zM802 601v-7h-2l3-5 3 5h-2v7z" fill="#f06414"/>
          <g class="tag"><text x="777" y="599">0,3</text><text x="818" y="601">0,5</text></g>
          <g fill="none" stroke-width="1.500">
            <circle cx="547.500" cy="678" r="15" fill="#fff" stroke="#111" stroke-width="1"/>
            <path d="M547.500 678V693A15 15 0 0 0 562.500 678zM547.500 678V663A15 15 0 0 0 532.500 678z" fill="#222"/>
            <path d="M547 678V645" stroke="#7c7cf0"/><path d="M544 658l3-14 4 14z" fill="#8c8cf4"/>
            <path d="M547 678L527 662" stroke="#f01cf0"/><path d="M526 661l9 3-3 4z" fill="#f01cf0"/>
            <path d="M547 678L617 663" stroke="#f4f40c"/><path d="M538 652l14 6 13-2v17l-14-5-13 2z" stroke="#222" stroke-width="1"/>
            <circle cx="547" cy="678" r="3" fill="#ff8410"/>
          </g>
          <g class="axis"><text x="543" y="641" fill="#7c7cf0">z</text><text x="519" y="661" fill="#f01cf0">y</text><text x="617" y="667" fill="#f0f010">x</text></g>
          <g fill="none">
            <path d="M343 630C345 612 372 612 374 635C365 628 350 630 343 633" stroke="#888" stroke-width="1.500"/>
            <path d="M353 640V604" stroke="#7c7ce4" stroke-width="3"/><path d="M349 610l4-16 4 16z" fill="#8484ec"/>
            <path d="M353 640L341 631" stroke="#c818c8" stroke-width="3"/><path d="M331 623l11 3-4 8z" fill="#c018c0"/>
            <path d="M353 641L386 635" stroke="#a8a010" stroke-width="3"/><path d="M384 630l16 3-14 6z" fill="#b8b010"/>
            <circle cx="353.500" cy="641.500" r="5.500" fill="#e47814"/><circle cx="352" cy="640" r="2" fill="#ffb464"/>
          </g>
          <g class="axis" fill="#222"><text x="350" y="592">z</text><text x="324" y="623">y</text><text x="401" y="634">x</text></g>
        </svg>

        <div class="palette">
          <button class="mini" aria-label="Validate"><svg><use href="#i-check"/></svg></button>
          <button class="mini" aria-label="Cancel"><svg><use href="#i-cancel"/></svg></button>
          <button class="round" aria-label="Favorites"><svg><use href="#p1"/></svg></button>
          <button class="round" aria-label="Tool"><svg><use href="#p2"/></svg></button>
          <button class="round" aria-label="Conditions"><svg><use href="#p3"/></svg></button>
          <button class="round" aria-label="Geometry"><svg><use href="#p4"/></svg></button>
          <button class="round" aria-label="Strategy"><svg><use href="#p5"/></svg></button>
          <button class="round" aria-label="Origin"><svg><use href="#p6"/></svg></button>
          <button class="round" aria-label="Stock"><svg><use href="#p7"/></svg></button>
        </div>
        <div class="caption"><svg><use href="#i-ask"/></svg><span>Side Mill Extended Length D20 L35 SD20</span></div>

        <table class="params">
          <tr><th>#1</th><td><svg><use href="#i-cube"/></svg></td></tr>
          <tr><th>Altitude...</th><td>10mm</td></tr>
          <tr><th>Stock to leave on floor</th><td>0,5mm</td></tr>
          <tr><th>Stock to leave on wall</th><td>0,3mm</td></tr>
          <tr><th>Stock to leave on wall island</th><td>1mm</td></tr>
          <tr><th>Maximal axial depth</th><td>15mm</td></tr>
          <tr><th>Final axial depth pass</th><td>0mm</td></tr>
          <tr><th><svg class="dart" viewBox="0 0 16 12"><path d="M1 1l8 4 1-2 5 8-9-1 1-2z" fill="#e0104c"/></svg></th><td></td></tr>
          <tr><th>Tool path preview</th><td>Yes</td></tr>
        </table>

        <div class="views">
          <button aria-label="Pan"><svg><use href="#v1"/></svg></button>
          <button class="more" aria-label="Rotate"><svg><use href="#v2"/></svg></button>
          <button class="more" aria-label="Camera"><svg><use href="#v3"/></svg></button>
          <button aria-label="Named view"><svg><use href="#v4"/></svg></button>
          <button class="more" aria-label="Split view"><svg><use href="#v5"/></svg></button>
          <button aria-label="Zoom all"><svg><use href="#v6"/></svg></button>
          <button aria-label="Zoom"><svg><use href="#lens"/></svg></button>
          <button aria-label="Rendering"><svg><use href="#v8"/></svg></button>
          <button class="more" aria-label="View"><svg><use href="#v3"/></svg></button>
          <button aria-label="Machine view"><svg><use href="#v9"/></svg></button>
        </div>
        <div class="scale">50mm<i></i></div>
        <i class="handle"></i>
      </div>
      <div class="bottomtabs">
        <button><svg><use href="#i-film"/></svg>Scenario</button>
        <button><svg><use href="#i-ops"/></svg>Operations</button>
      </div>
    </main>
  </div>

  <footer><span>Ready.</span><span class="coords">X:150,894; Y:398,069; Z:0</span><svg viewBox="0 0 12 12"><path d="M9 1h2v2H9zM9 5h2v2H9zM9 9h2v2H9zM5 5h2v2H5zM5 9h2v2H5zM1 9h2v2H1z" fill="#9aa0ac"/></svg></footer>

  <div class="notes">
    <i class="frame f-menu"></i><i class="frame f-iso"></i><i class="frame f-palette"></i><i class="frame f-tabs"></i>
    <span class="n1">1</span><span class="n2">2</span><span class="n3">3</span><span class="n4">4</span><span class="n5">5</span><span class="n6">6</span><span class="n7">7</span><span class="n8">8</span><span class="n9">9</span><span class="n10">10</span><span class="n11">11</span><span class="n12">12</span><span class="n13">13</span><span class="n14">14</span>
  </div>
</div>
</body>
</html>
```
FILE: styles.css
```css
* { box-sizing: border-box; }
html, body { margin: 0; height: 100%; background: #fff; }
body { font: 12px/18px "Open Sans", "Noto Sans", sans-serif; color: #1a1a1a; }
button { font: inherit; color: inherit; border: 0; background: none; padding: 0; margin: 0; display: flex; align-items: center; justify-content: center; }
svg { display: block; flex: none; width: 18px; height: 18px; overflow: visible; }
svg.defs { position: absolute; width: 0; height: 0; }
h1, h2, ul { margin: 0; padding: 0; }
ul { list-style: none; }
.spring { flex: 1; }
.bar { width: 1px; height: 26px; background: #8c8c94; flex: none; }
.on { background: linear-gradient(#fbd7ae, #fbb36c); border: 1px solid #e8a05c; }
.more { position: relative; }
.more::after { content: ""; border: 3px solid transparent; border-top: 3px solid #111; border-bottom: 0; }

.window { position: relative; display: flex; flex-direction: column; height: 100vh; min-height: 700px; padding: 0 7px 8px; border: 1px solid #000; border-width: 3px 1px 1px; border-radius: 8px 8px 0 0; background: #42424c; overflow: hidden; }

.titlebar { display: flex; flex: none; height: 27px; background: linear-gradient(#4c4c56, #1a1a22); }
.quick { display: flex; align-items: center; gap: 6px; width: 256px; height: 22px; margin-top: 5px; padding-left: 4px; background: #ececf2; clip-path: polygon(0 0, 248px 0, 256px 100%, 0 100%); }
.quick svg { width: 17px; height: 17px; }
.quick .bar { height: 14px; margin: 0 4px 0 3px; }
.quick .more { gap: 3px; }
h1 { flex: 1; margin-left: 8px; font: bold 13px/28px "Open Sans", "Noto Sans", sans-serif; color: #fff; }
.controls { display: flex; align-items: center; gap: 5px; height: 22px; margin-top: 5px; padding: 0 5px 0 7px; background: #e4e4ea; border-bottom-left-radius: 4px; }
.controls svg { width: 14px; height: 14px; }

.ribbon { display: flex; flex: none; justify-content: space-between; align-items: flex-end; height: 25px; background: #e4e4ea; border-bottom: 1px solid #a8a8ac; }
.menu { display: grid; grid-template-columns: 64px 106px 79px 89px 102px 100px 60px 113px 76px; height: 22px; margin-left: 1px; }
.menu button { justify-content: flex-start; gap: 2px; padding: 0 4px 0 3px; background: linear-gradient(#e8e8ec, #d2d2d8); border-right: 1px solid #a8a8b0; }
.menu button.current { background: #fbfbff; }
.menu svg { width: 17px; height: 17px; }
.menu .drop { width: 11px; height: 12px; margin-left: auto; color: #7676b4; }
.help { padding: 0 2px 1px 0; }
.help svg { width: 22px; height: 22px; }

.toolbar { display: flex; flex: none; align-items: center; height: 33px; padding: 1px 7px 0 6px; background: #fafaff; border-bottom: 1px solid #a0a0a8; }
.toolbar button { width: 28px; height: 28px; }
.toolbar svg { width: 24px; height: 24px; }
.toolbar .bar { margin: 0 5px; }

.body { display: flex; flex: 1; min-height: 0; background: #e4e4ea; }
.strip { width: 21px; padding-top: 2px; flex: none; }
.iso { flex-direction: column; gap: 4px; width: 21px; height: 74px; justify-content: flex-start; padding-top: 3px; background: linear-gradient(90deg, #f0f0f4, #c8c8d0); }
.iso svg { width: 16px; height: 16px; }
.iso span { writing-mode: vertical-rl; font-size: 11px; line-height: 14px; }

.left { display: flex; flex-direction: column; width: 259px; flex: none; padding-top: 2px; }
.panel { display: flex; flex-direction: column; min-height: 0; }
.missler { flex: 211 1 0; }
.preview { flex: 102 1 0; margin: 4px 0 3px; display: flex; justify-content: center; align-items: center; background: #fff; border: 1px solid #42424c; padding-right: 12px; }
.preview svg { width: 74px; height: 56px; margin-top: 12px; }
.machinings { flex: 317 1 0; }
h2 { display: flex; flex: none; align-items: center; gap: 8px; height: 18px; padding: 0 5px; background: linear-gradient(#42424c, #1e1e26); color: #fff; font-size: 12px; line-height: 18px; }
h2 svg { width: 13px; height: 13px; }
h2 .pin { margin-left: auto; }
.list { position: relative; display: flex; flex: 1; min-height: 0; background: #fff; border: 1px solid #7c8088; overflow: hidden; }
.tree { flex: 1; min-width: 0; padding-top: 1px; }
.tree ul { margin-left: 19px; }
.tree li { position: relative; }
.tree li::before { content: ""; position: absolute; left: 12px; top: 0; bottom: 0; border-left: 1px dotted #9a9a9a; }
.tree li:last-child::before { bottom: auto; height: 9px; }
.row { position: relative; display: flex; align-items: center; height: 18px; padding-left: 8px; white-space: nowrap; }
.row::before { content: ""; position: absolute; left: 12px; top: 9px; width: 12px; border-top: 1px dotted #9a9a9a; }
.row b { position: relative; width: 9px; height: 9px; margin-right: 6px; border: 1px solid #8c98a8; border-radius: 1px; background: #fff; font: bold 9px/7px "Liberation Sans", sans-serif; text-align: center; color: #223c78; }
.row svg { position: relative; width: 17px; height: 17px; margin-right: 1px; }
.row .plus { width: 14px; height: 12px; }
.row span { padding: 0 3px; }
.leaf { padding-left: 23px; }
.marked { background: #eee; }
.teal { color: #108080; }
.amber { color: #f8a010; }
.pale { color: #add8e6; }
.ops { padding: 1px 0 0 2px; display: block; }
.ops::before { content: ""; position: absolute; left: 1px; top: 2px; width: 3px; height: 90px; background: #0000f0; z-index: 1; }
.ops .tree { margin-left: -2px; }
.picked::after { content: ""; position: absolute; left: -54px; right: 0; top: 0; height: 19px; border: 1px solid #000080; border-width: 1px 0; background: linear-gradient(90deg, transparent 76px, #bcd2f4 76px, #dce8fc); z-index: 0; }
.picked > * { z-index: 1; }
.picked span { position: relative; }
.vscroll { display: flex; flex-direction: column; align-items: center; width: 18px; background: #f2f2f4; padding: 8px 1px; }
.vscroll .up, .vscroll .down { border: 4px solid transparent; }
.vscroll .up { border-top: 0; border-bottom: 4px solid #333; }
.vscroll .down { border-bottom: 0; border-top: 4px solid #333; margin-top: auto; }
.vscroll .thumb { width: 15px; height: 65px; margin-top: 14px; border: 1px solid #9a9aa0; border-radius: 2px; background: linear-gradient(#555, #555) center 26px / 7px 1px no-repeat, linear-gradient(#555, #555) center 29px / 7px 1px no-repeat, linear-gradient(#555, #555) center 32px / 7px 1px no-repeat, linear-gradient(90deg, #f8f8f8, #ccccd2); }
.hscroll { position: absolute; left: 0; right: 0; bottom: 0; height: 17px; display: flex; align-items: center; gap: 8px; padding: 0 8px; background: #f0f0f2; }
.hscroll .grip { width: 196px; height: 15px; border: 1px solid #9a9aa0; border-radius: 2px; background: linear-gradient(#f4f4f4, #cacad0); font: 8px/13px "Liberation Sans", sans-serif; text-align: center; }
.hscroll .prev, .hscroll .next { border: 4px solid transparent; }
.hscroll .prev { border-left: 0; border-right: 4px solid #222; }
.hscroll .next { border-right: 0; border-left: 4px solid #222; margin-left: auto; }
.subbar { display: flex; flex: none; align-items: center; height: 30px; background: linear-gradient(#fafafc, #c8c8d0); }
.subbar button { width: 27px; height: 27px; margin-right: 1px; }
.subbar svg { width: 24px; height: 24px; }
.subbar > .bar { margin: 0 9px 0 2px; }
.filters { height: 30px; background: #f4f4f8; }
.filters .apart { margin-left: 12px; }
.machine { display: flex; flex: none; justify-content: space-between; height: 16px; background: linear-gradient(#fff, #c8c8d0); }
.machine a { margin-left: 9px; color: #0000e8; font: bold 12px/15px "Open Sans", "Noto Sans", sans-serif; }
.machine button { width: 46px; border-left: 1px solid #b8b8c0; }
.machine svg { width: 14px; height: 14px; }

main { display: flex; flex: 1; flex-direction: column; min-width: 0; margin-left: 3px; padding-top: 2px; }
.tabs { display: flex; flex: none; align-items: center; height: 19px; padding-right: 6px; }
.tabs button { height: 19px; padding: 0 4px 0 2px; gap: 2px; background: linear-gradient(#fcfcfe, #e0e0ea); border: 1px solid #a4a4b0; border-bottom: 0; border-radius: 3px 3px 0 0; }
.tabs button svg { width: 16px; height: 15px; }
.tabs .active { background: linear-gradient(#fcd0a0, #f8b070); font-weight: bold; }
.tabctl { width: 12px; height: 12px; margin-left: 7px; color: #50505a; }
.canvas { position: relative; flex: 1; min-height: 0; background: #fff; border: 2px solid #5c5c68; border-width: 1px 0 2px 1px; }
.scene { position: absolute; left: 0; top: 0; width: 100%; height: 100%; }
.steel { --edge: #1c2824; --face: #1f70b6; --light: #2a84cc; --mid: #286696; --dark: #215a82; --hole: #e6e6c8; }
.olive { --edge: #5c5c00; --face: #8f8f00; --light: #a0a000; --mid: #7c7c00; --dark: #666600; --hole: #fff; }
.tag, .caption, .params, .scale { font-family: "Liberation Sans", sans-serif; color: #111; }
.tag { font-size: 15px; }
.axis { font-family: "Liberation Sans", sans-serif; font-size: 14px; }
.palette { position: absolute; left: 3px; top: 2px; width: 60px; display: flex; flex-wrap: wrap; gap: 4px; padding: 0 2px; }
.mini { width: 24px; height: 23px; }
.mini svg { width: 23px; height: 20px; }
.mini + .mini svg { width: 16px; height: 16px; }
.round { width: 37px; height: 37px; border: 3px solid #444a58; border-radius: 50%; background: #fff; }
.round svg { width: 23px; height: 23px; }
.caption { position: absolute; left: 70px; top: 4px; display: flex; gap: 15px; font-size: 15px; line-height: 33px; }
.caption svg { width: 13px; height: 20px; }
.params { position: absolute; right: 38px; top: 26px; width: 259px; border: 1px solid #111; border-radius: 7px; border-spacing: 0; background: #fff; font-size: 15px; line-height: 16px; }
.params th, .params td { height: 18px; padding: 0 4px; font-weight: normal; border-bottom: 1px solid #111; white-space: nowrap; }
.params th { text-align: right; border-right: 1px solid #111; }
.params td { width: 56px; padding: 0 3px; }
.params tr:first-child > * { height: 25px; }
.params tr:last-child > * { border-bottom: 0; }
.params td svg { width: 24px; height: 23px; }
.params .dart { width: 16px; height: 12px; margin-left: auto; }
.views { position: absolute; right: 0; top: 12px; width: 37px; display: flex; flex-direction: column; gap: 7px; }
.views button { width: 37px; height: 24px; justify-content: flex-start; }
.views svg { width: 24px; height: 24px; margin-right: 5px; }
.scale { position: absolute; right: 8px; bottom: 3px; width: 109px; text-align: center; font-size: 14px; line-height: 17px; }
.scale i { display: block; height: 8px; margin-top: 1px; background: #f8a038; border: 1px solid #222; border-width: 0 1px 1px; }
.handle { position: absolute; left: 297px; bottom: -2px; width: 80px; height: 6px; background: linear-gradient(#5c5c68, #5c5c68) center 2px / 100% 1px no-repeat #e4e4ea; border: 2px solid #5c5c68; border-bottom: 0; }
.bottomtabs { display: flex; flex: none; height: 22px; padding-top: 2px; }
.bottomtabs button { gap: 2px; padding: 0 4px 0 2px; border-right: 1px solid #a4a4b0; background: linear-gradient(#e4e4ea, #cfcfd6); }
.bottomtabs svg { width: 16px; height: 16px; }

footer { display: flex; flex: none; align-items: center; height: 24px; padding: 2px 0 0 4px; background: linear-gradient(#f4f4f8, #ccccd4); }
footer .coords { margin-left: auto; padding-right: 121px; font: 11px/18px "Liberation Sans", sans-serif; }
footer svg { width: 12px; height: 12px; align-self: flex-end; }

.notes { position: absolute; inset: -3px -1px 0; pointer-events: none; }
.frame { position: absolute; border: 3px solid #f00; }
.f-menu { left: 8px; top: 29px; width: 793px; height: 27px; }
.f-iso { left: 8px; top: 87px; width: 23px; height: 78px; }
.f-palette { left: 294px; top: 111px; width: 62px; height: 315px; }
.f-tabs { left: 291px; top: 703px; width: 165px; height: 23px; }
.notes span { position: absolute; font: bold 32px/32px "Liberation Sans", sans-serif; color: transparent; -webkit-text-stroke: 1px #f00; text-shadow: 4px 4px 3px rgba(0, 0, 0, .4); }
.n1 { left: 738px; top: -1px; }
.n2 { left: 818px; top: 27px; }
.n3 { left: 367px; top: 205px; }
.n4 { left: 218px; top: 180px; }
.n5 { left: 10px; top: 173px; }
.n6 { left: 933px; top: 432px; }
.n7 { left: 639px; top: 191px; }
.n8 { left: 132px; top: 583px; }
.n9 { left: 223px; top: 343px; }
.n10 { left: 502px; top: 298px; }
.n11 { left: 836px; top: 57px; }
.n12 { left: 360px; top: 566px; }
.n13 { left: 250px; top: 4px; }
.n14 { left: 460px; top: 699px; }
```
